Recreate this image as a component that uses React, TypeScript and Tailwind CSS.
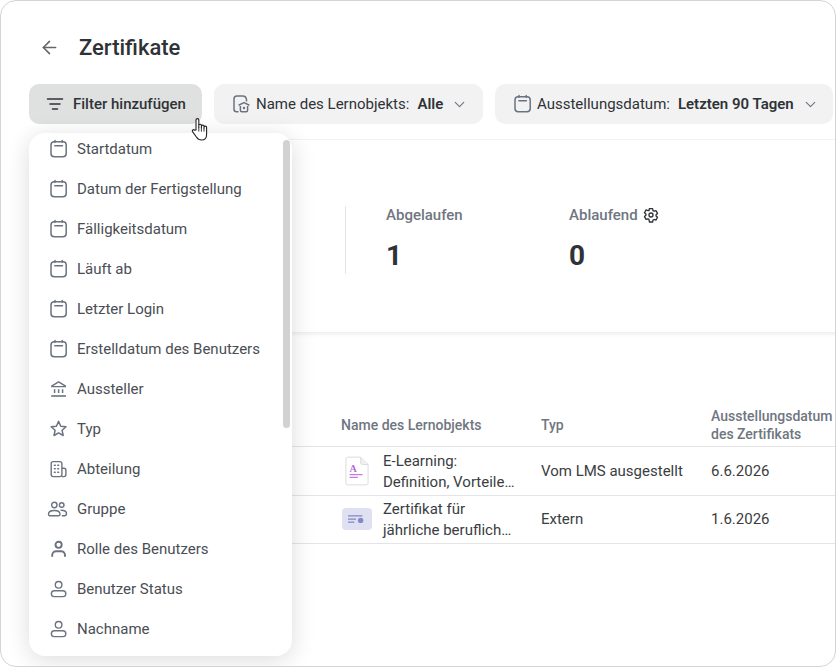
import { ChevronDown, ArrowLeft } from 'lucide-react';

const ICON = 'w-5 h-5 text-[#6b7280] shrink-0';

function CalendarIcon() {
  return (
    <svg viewBox="0 0 20 20" fill="none" stroke="currentColor" strokeWidth="1.5" className={ICON}>
      <rect x="2" y="2.8" width="15.2" height="15" rx="3.2" />
      <path d="M6 1.6v1.6M13.2 1.6v1.6M5.8 6.8h7.6" strokeLinecap="round" />
    </svg>
  );
}

function BankIcon() {
  return (
    <svg viewBox="0 0 20 20" fill="none" stroke="currentColor" strokeWidth="1.4" className={ICON}>
      <path d="M2.2 7.4 9.6 2.8 17 7.4M2.2 7.6H17" strokeLinejoin="round" />
      <path d="M5.6 10.2v3.8M9.6 10.2v3.8M13.6 10.2v3.8" strokeWidth="1.5" />
      <path d="M2.2 17h14.8" strokeWidth="1.6" />
    </svg>
  );
}

function StarIcon() {
  return (
    <svg viewBox="0 0 20 20" fill="none" stroke="currentColor" strokeWidth="1.5" strokeLinejoin="round" className={ICON}>
      <path d="m9.6 2.4 2.2 4.8 5.2.6-3.9 3.5 1.1 5.2-4.6-2.6L5 16.5l1.1-5.2-3.9-3.5 5.2-.6z" />
    </svg>
  );
}

function BuildingIcon() {
  return (
    <svg viewBox="0 0 20 20" fill="none" stroke="currentColor" strokeWidth="1.4" className={ICON}>
      <rect x="2.2" y="2.6" width="10.7" height="15" rx="2" />
      <path d="M12.9 9.3h2a2 2 0 0 1 2 2v4.3a2 2 0 0 1-2 2h-2" />
      <path d="M5.4 6.3h.8M8.8 6.3h.8M5.4 9.8h.8M8.8 9.8h.8M5.4 13.3h.8M8.8 13.3h.8" strokeWidth="1.6" strokeLinecap="round" />
    </svg>
  );
}

function GroupIcon() {
  return (
    <svg viewBox="0 0 20 20" fill="none" stroke="currentColor" strokeWidth="1.4" className="w-[21px] h-5 text-[#6b7280] shrink-0 -ml-[2px]">
      <circle cx="6.8" cy="6" r="2.7" />
      <circle cx="14.2" cy="6" r="2.3" />
      <path d="M1 15.2c0-2.4 2.4-3.7 5.8-3.7s5.7 1.3 5.7 3.7c0 1-.7 1.6-1.7 1.6H2.7c-1 0-1.7-.6-1.7-1.6Z" />
      <path d="M13.6 11.2c3.2 0 5.4 1.2 5.4 3.4 0 1.3-.8 2.2-2.2 2.2h-2" strokeLinecap="round" />
    </svg>
  );
}

function RoleIcon() {
  return (
    <svg viewBox="0 0 20 20" fill="none" stroke="currentColor" strokeWidth="1.9" className={ICON}>
      <circle cx="9.6" cy="5.8" r="3.1" />
      <path d="M3.2 17.8v-1.6c0-2.5 2-4 4-4H12c2 0 4 1.5 4 4v1.6" />
    </svg>
  );
}

function PersonIcon() {
  return (
    <svg viewBox="0 0 20 20" fill="none" stroke="currentColor" strokeWidth="1.4" className={ICON}>
      <circle cx="9.6" cy="5.8" r="3.3" />
      <rect x="2.4" y="11.8" width="14.4" height="5.8" rx="2.9" />
    </svg>
  );
}

const menuItems: [string, () => React.ReactElement][] = [
  ['Startdatum', CalendarIcon],
  ['Datum der Fertigstellung', CalendarIcon],
  ['Fälligkeitsdatum', CalendarIcon],
  ['Läuft ab', CalendarIcon],
  ['Letzter Login', CalendarIcon],
  ['Erstelldatum des Benutzers', CalendarIcon],
  ['Aussteller', BankIcon],
  ['Typ', StarIcon],
  ['Abteilung', BuildingIcon],
  ['Gruppe', GroupIcon],
  ['Rolle des Benutzers', RoleIcon],
  ['Benutzer Status', PersonIcon],
  ['Nachname', PersonIcon],
];

function HandCursor() {
  return (
    <svg viewBox="0 0 18 25" className="absolute left-[190px] top-[116px] w-[18px] h-[25px]" fill="#fff" stroke="#222" strokeWidth="1.1" strokeLinejoin="round">
      <path d="M5 13V3a1.4 1.4 0 0 1 2.8 0v7.5V8.6a1.3 1.3 0 0 1 2.6 0v2V9.4a1.3 1.3 0 0 1 2.6 0v1.6-.6a1.3 1.3 0 0 1 2.6 0v7c0 3.4-2 5.6-5 5.6-2.6 0-4-1-5.2-3L1.5 14.6c-.8-1.3.9-2.6 2-1.5z" />
      <path d="M7.8 10.5v4M10.4 10.6v4M13 11v3.6" strokeWidth="0.9" />
    </svg>
  );
}

function SeatIcon() {
  return (
    <svg viewBox="0 0 20 20" fill="none" stroke="#6b7280" strokeWidth="1.5" className="w-5 h-5 shrink-0 mr-[1px] -ml-[1px]">
      <path d="M7 17.8H5.5a2.5 2.5 0 0 1-2.5-2.5V5a3 3 0 0 1 3-3h5.5a4 4 0 0 1 4 3.6V7" strokeLinecap="round" />
      <path d="m7.6 11.2 5.4-2.6 5.4 2.6" strokeLinejoin="round" />
      <path d="M9.4 12v4.2a1.5 1.5 0 0 0 1.5 1.5h4.2a1.5 1.5 0 0 0 1.5-1.5V12" />
      <circle cx="13" cy="14" r="1.2" fill="#6b7280" stroke="none" />
    </svg>
  );
}

function GearIcon() {
  return (
    <svg viewBox="0 0 24 24" fill="none" stroke="#2f3237" strokeWidth="2" strokeLinejoin="round" className="w-[16px] h-[16px]">
      <path d="M9.6 2.5h4.8l.6 2.9 1.6.9 2.8-.9 2.4 4.2-2.2 2v1.8l2.2 2-2.4 4.2-2.8-.9-1.6.9-.6 2.9H9.6L9 18.6l-1.6-.9-2.8.9-2.4-4.2 2.2-2v-1.8l-2.2-2 2.4-4.2 2.8.9L9 5.4z" />
      <circle cx="12" cy="12" r="3" />
    </svg>
  );
}

function DocThumb() {
  return (
    <svg viewBox="0 0 26 32" className="ml-[4px] w-[24px] h-[30px] shrink-0" fill="none">
      <path d="M3 1h14l8 8v20a2 2 0 0 1-2 2H3a2 2 0 0 1-2-2V3a2 2 0 0 1 2-2Z" fill="#fff" stroke="#d9d9dc" />
      <path d="M17 1v6a2 2 0 0 0 2 2h6" fill="#f0f0f2" stroke="#d9d9dc" />
      <text x="5" y="17" fontFamily="Liberation Serif, serif" fontSize="11" fontWeight="700" fill="#b06be0">A</text>
      <path d="M5 20h14M5 23h9" stroke="#c27be8" strokeWidth="1.3" />
    </svg>
  );
}

function CertThumb() {
  return (
    <div className="ml-[1px] w-[30px] h-[22px] rounded-[4px] bg-[#dfe1f2] flex items-center justify-center shrink-0">
      <svg viewBox="0 0 20 12" className="w-[18px] h-[11px]" fill="none" stroke="#8488c4" strokeWidth="1.3">
        <path d="M0 2h16M0 5.5h9M0 9h7" />
        <circle cx="14" cy="7" r="3" fill="#8488c4" stroke="none" />
      </svg>
    </div>
  );
}

function Pill({ icon, label, value, width }: { icon: React.ReactNode; label: string; value: string; width: string }) {
  return (
    <div className={`${width} h-10 shrink-0 rounded-[10px] bg-[#f2f2f3] flex items-center pl-[18px] text-[15px] text-[#2f3237]`}>
      {icon}
      <span className="ml-[4px]">{label}</span>
      <span className="ml-[8px] font-semibold">{value}</span>
      <ChevronDown className="ml-[8px] w-[17px] h-[17px] text-[#6b7280]" strokeWidth={1.6} />
    </div>
  );
}

export default function App() {
  return (
    <div className="relative w-[836px] h-[667px] overflow-hidden rounded-[16px] border border-[#d4d4d6] bg-white font-['Roboto',sans-serif]">
      {/* Header */}
      <div className="flex items-center h-[30px] mt-[31px] ml-[38px]">
        <ArrowLeft className="w-[21px] h-[21px] text-[#5f656d]" strokeWidth={1.8} />
        <h1 className="ml-[19px] text-[22px] font-medium text-[#2f3237]">Zertifikate</h1>
      </div>

      {/* Filters */}
      <div className="flex gap-3 mt-[22px] ml-[28px] w-[900px]">
        <div className="w-[173px] h-10 rounded-[10px] bg-[#dfe1e0] flex items-center pl-[17px] text-[15px] font-medium text-[#2f3237]">
          <svg viewBox="0 0 18 14" className="w-[18px] h-[14px]" fill="none" stroke="#2f3237" strokeWidth="1.5" strokeLinecap="round">
            <path d="M1.5 2h15M4 7h10M6.5 12h5" />
          </svg>
          <span className="ml-[9px]">Filter hinzufügen</span>
        </div>
        <Pill icon={<SeatIcon />} label="Name des Lernobjekts:" value="Alle" width="w-[269px]" />
        <Pill icon={<CalendarIcon />} label="Ausstellungsdatum:" value="Letzten 90 Tagen" width="w-[338px]" />
      </div>

      {/* Stats */}
      <div className="mt-[15px] ml-[100px] w-[760px] h-[193px] pt-[8px] border-t border-[#f3f3f4] shadow-[0_2px_4px_rgba(0,0,0,0.08)] flex items-center pl-[244px]">
        <div className="w-px h-[68px] bg-[#e5e5e7]" />
        <div className="ml-[40px] w-[183px] -mt-[3px]">
          <div className="text-[15px] font-medium text-[#6f7680] h-5 leading-5">Abgelaufen</div>
          <div className="mt-[15px] text-[28px] font-bold text-[#2f3237] leading-8">1</div>
        </div>
        <div className="-mt-[3px]">
          <div className="flex items-center gap-[5px] text-[15px] font-medium text-[#6f7680] h-5 leading-5">
            Ablaufend <GearIcon />
          </div>
          <div className="mt-[15px] text-[28px] font-bold text-[#2f3237] leading-8">0</div>
        </div>
      </div>

      {/* Table */}
      <div className="mt-[72px] ml-[100px] text-[15px] text-[#3a3d42]">
        <div className="flex items-center h-[43px] border-b border-[#e4e4e6] text-[14px] font-medium text-[#6f7680] leading-[18px] pl-[240px]">
          <div className="w-[200px] shrink-0">Name des Lernobjekts</div>
          <div className="w-[170px] shrink-0">Typ</div>
          <div className="w-[130px] shrink-0">Ausstellungsdatum des Zertifikats</div>
        </div>
        <div className="flex items-center h-[49px] border-b border-[#e4e4e6] leading-[21px] pl-[240px]">
          <div className="w-[200px] shrink-0 flex items-center">
            <div className="w-[42px]"><DocThumb /></div>
            <div className="pt-[2px]">E-Learning:<br />Definition, Vorteile…</div>
          </div>
          <div className="w-[170px] shrink-0">Vom LMS ausgestellt</div>
          <div>6.6.2026</div>
        </div>
        <div className="flex items-center h-[48px] pb-[1px] border-b border-[#e4e4e6] leading-[21px] pl-[240px]">
          <div className="w-[200px] shrink-0 flex items-center">
            <div className="w-[42px]"><CertThumb /></div>
            <div className="pt-[2px]">Zertifikat für<br />jährliche beruflich…</div>
          </div>
          <div className="w-[170px] shrink-0">Extern</div>
          <div>1.6.2026</div>
        </div>
      </div>

      {/* Dropdown */}
      <div className="absolute left-[28px] top-[132px] w-[263px] h-[523px] overflow-hidden rounded-[16px] bg-white shadow-[0_4px_24px_rgba(0,0,0,0.14)]">
        <div className="-mt-[4px]">
          {menuItems.map(([label, Icon]) => (
            <div key={label} className="h-10 flex items-center pl-[20px] text-[15px] text-[#4a4e54]">
              <div className="w-[28px]"><Icon /></div>
              <span>{label}</span>
            </div>
          ))}
        </div>
        <div className="absolute right-[2px] top-[7px] w-[7px] h-[288px] rounded-full bg-[#d2d2d2]" />
      </div>

      <HandCursor />
    </div>
  );
}
